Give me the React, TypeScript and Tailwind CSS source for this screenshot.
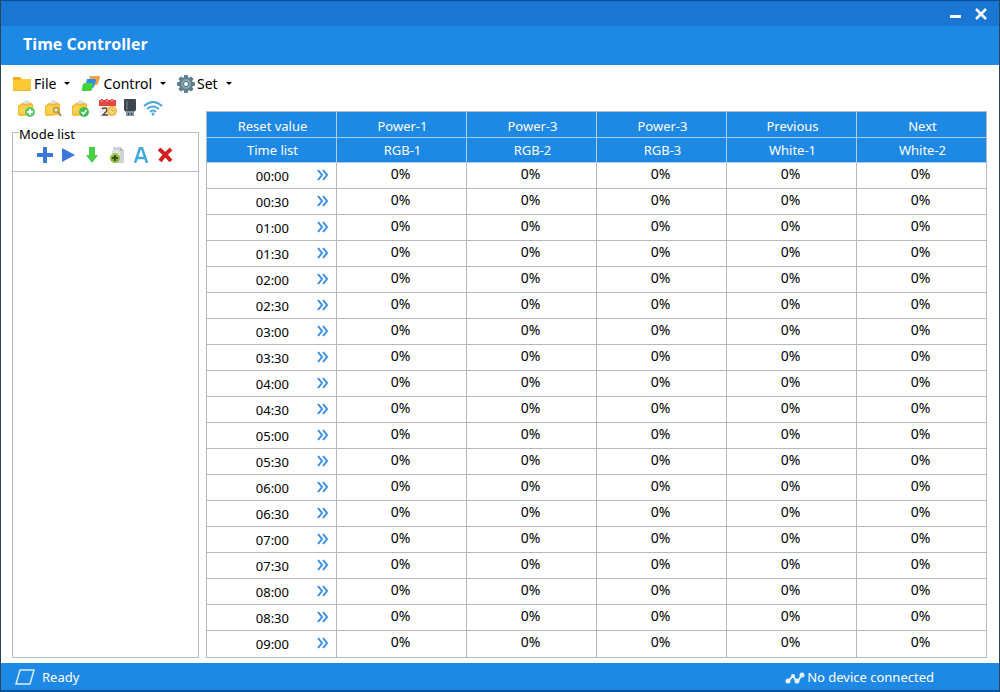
import { useState } from 'react'
import type { ReactNode } from 'react'

const channels = [
  { action: 'Power-1', name: 'RGB-1' },
  { action: 'Power-3', name: 'RGB-2' },
  { action: 'Power-3', name: 'RGB-3' },
  { action: 'Previous', name: 'White-1' },
  { action: 'Next', name: 'White-2' },
]

const times = Array.from({ length: 19 }, (_, i) => {
  const hour = String(Math.floor(i / 2)).padStart(2, '0')
  return `${hour}:${i % 2 ? '30' : '00'}`
})

function FolderIcon() {
  return (
    <svg width="20" height="16" viewBox="0 0 20 16">
      <path d="M1 1h7l2 2h9v12H1z" fill="#f0b01e" />
      <path d="M1 4h7l2-1h9v12H1z" fill="#fcc934" />
      <path d="M1 14h18v1H1z" fill="#f3b62a" />
    </svg>
  )
}

function LayersIcon() {
  return (
    <svg width="20" height="16" viewBox="0 0 20 16">
      <path d="M9 0h9q1.500 0 1 1.500l-2 6q-.5 1.500-2 1.500H7z" fill="#f2a04a" />
      <path d="M6 3h8q1.500 0 1 1.500l-2 6q-.5 1.500-2 1.500H4z" fill="#2f8fe8" />
      <path d="M4 7h7q1.500 0 1 1.500l-1 5q-.5 1.500-2 1.500H2q-1.500 0-1.200-1.500l1-5Q2.300 7 4 7z" fill="#45d13c" />
    </svg>
  )
}

function GearIcon() {
  return (
    <svg width="18" height="18" viewBox="0 0 18 18">
      <g fill="#5d7f8a">
        <rect x="7" y="0" width="4" height="18" rx="1" />
        <rect x="7" y="0" width="4" height="18" rx="1" transform="rotate(45 9 9)" />
        <rect x="7" y="0" width="4" height="18" rx="1" transform="rotate(90 9 9)" />
        <rect x="7" y="0" width="4" height="18" rx="1" transform="rotate(135 9 9)" />
        <circle cx="9" cy="9" r="7" />
      </g>
      <circle cx="9" cy="9" r="5" fill="#86a5ae" />
      <circle cx="9" cy="9" r="2.5" fill="#fff" stroke="#4e717d" />
    </svg>
  )
}

function ProjectIcon({ children }: { children: ReactNode }) {
  return (
    <svg width="18" height="18" viewBox="0 0 18 18">
      <path d="M4 5l5-4 5 2v4H4z" fill="#dcdde2" />
      <path d="M1 7l4-3 3 1 6-1q2 0 2 2v9q0 1-1 1l-12 1q-2 0-2-2z" fill="#f3b92a" />
      <path d="M2 8l3-2h2l2 1 5-1q1 0 1 1v7q0 1-1 1H3q-1 0-1-1z" fill="#fad14e" />
      {children}
    </svg>
  )
}

function NewIcon() {
  return (
    <ProjectIcon>
      <circle cx="13" cy="13" r="5" fill="#58cc63" />
      <path d="M13 10v6M10 13h6" stroke="#fff" strokeWidth="2" />
    </ProjectIcon>
  )
}

function FindIcon() {
  return (
    <ProjectIcon>
      <circle cx="12" cy="11" r="2.5" fill="#f3e6ae" stroke="#b39a59" strokeWidth="1.5" />
      <path d="M14 13l3 4" stroke="#a38f63" strokeWidth="2" />
    </ProjectIcon>
  )
}

function SaveIcon() {
  return (
    <ProjectIcon>
      <circle cx="13" cy="13" r="5" fill="#43bd52" />
      <path d="M10.500 13l2 2 3-4" fill="none" stroke="#fff" strokeWidth="1.5" />
    </ProjectIcon>
  )
}

function CalendarIcon() {
  return (
    <svg width="20" height="18" viewBox="0 0 20 18">
      <path d="M2 6h16v11H2z" fill="#efefef" />
      <path d="M1 1h2V0h2v1h3V0h2v1h3V0h2v1h3v6H1z" fill="#e5453f" />
      <path d="M4 1v2M9 1v2M14 1v2" stroke="#f8b3ad" />
      <path d="M4 10q1-1 3-1 2 0 2 2 0 1-4 5h5" fill="none" stroke="#55443f" strokeWidth="1.5" />
      <circle cx="14" cy="12" r="5" fill="#f5b83a" />
      <circle cx="14" cy="12" r="3" fill="#fbdc8a" />
      <path d="M14 10v2h2" fill="none" stroke="#e6962c" />
    </svg>
  )
}

function UsbIcon() {
  return (
    <svg width="14" height="18" viewBox="0 0 14 18">
      <path d="M1 1q0-1 1-1h10q1 0 1 1v10l-2 2H3l-2-2z" fill="#3d454e" />
      <path d="M3 2h2v9H3z" fill="#5b6671" />
      <path d="M3 12h8v5H3z" fill="#8295a4" />
      <path d="M5 14h1v2H5zM8 14h1v2H8z" fill="#384550" />
    </svg>
  )
}

function WifiIcon() {
  return (
    <svg width="20" height="16" viewBox="0 0 20 16" fill="none" stroke="#4ba5dc" strokeWidth="2">
      <path d="M1 6q9-8 18 0" />
      <path d="M4 9q6-5 12 0" />
      <path d="M7 12q3-3 6 0" />
      <circle cx="10" cy="14" r="1.5" fill="#4ba5dc" stroke="none" />
    </svg>
  )
}

function CopyIcon() {
  return (
    <svg width="16" height="18" viewBox="0 0 16 18">
      <path d="M4 1h7l4 4v12H4z" fill="#cfd4d7" />
      <path d="M11 1v4h4z" fill="#aeb6bb" />
      <path d="M3 4h6l2 2v9H3z" fill="#e2e5e4" />
      <circle cx="6" cy="12" r="5" fill="#8bb83e" />
      <path d="M6 9v6M3 12h6" stroke="#355317" strokeWidth="2" />
      <path d="M2 10q4-4 8 0" fill="none" stroke="#b9d886" />
    </svg>
  )
}

const menus = [
  { label: 'File', icon: <FolderIcon /> },
  { label: 'Control', icon: <LayersIcon /> },
  { label: 'Set', icon: <GearIcon /> },
]

const tools = [
  { label: 'New project', icon: <NewIcon />, width: 'w-[27px]' },
  { label: 'Open project', icon: <FindIcon />, width: 'w-[27px]' },
  { label: 'Save project', icon: <SaveIcon />, width: 'w-[27px]' },
  { label: 'Sync time', icon: <CalendarIcon />, width: 'w-[25px]' },
  { label: 'USB', icon: <UsbIcon />, width: 'w-5' },
  { label: 'Wi-Fi', icon: <WifiIcon />, width: 'w-[25px]' },
]

const modeTools = [
  {
    label: 'Add mode',
    icon: <path d="M6 0h4v6h6v4h-6v6H6v-6H0V6h6z" fill="#3c78d8" />,
  },
  {
    label: 'Run mode',
    icon: <path d="M1 1l13 7-13 7z" fill="#3c78dc" />,
  },
  {
    label: 'Download mode',
    icon: <path d="M4 0h6v8h3l-6 8-6-8h3z" fill="#45d143" />,
  },
  { label: 'Copy mode', icon: null },
  {
    label: 'Rename mode',
    icon: <path d="M2 16L7 1h2l5 15M4 11h8" fill="none" stroke="#3ea9dc" strokeWidth="2.5" />,
  },
  {
    label: 'Delete mode',
    icon: <path d="M2 2q5 4 12 12M14 2q-6 5-11 12" fill="none" stroke="#d3201f" strokeWidth="4" />,
  },
]

export default function App() {
  const [values] = useState(() => times.map(() => channels.map(() => 0)))

  return (
    <div className="flex min-h-screen flex-col border-x border-t border-b-2 border-x-[#29465a] border-t-[#0d4a94] border-b-[#0c5596] bg-white font-['Noto_Sans','Open_Sans',sans-serif] text-black">
      <div className="flex h-[25px] items-center justify-end gap-2 bg-[#1976d2] pr-2.5">
        <button type="button" aria-label="Minimize" className="flex h-5 w-5 items-center justify-center">
          <svg width="16" height="16" viewBox="0 0 16 16">
            <path d="M3 9h11v3H3z" fill="#fff" />
          </svg>
        </button>
        <button type="button" aria-label="Close" className="flex h-5 w-4 items-center justify-center">
          <svg width="14" height="14" viewBox="0 0 14 14">
            <path d="M2 2l10 10M12 2L2 12" stroke="#fff" strokeWidth="2.5" />
          </svg>
        </button>
      </div>
      <header className="flex h-[39px] items-center bg-[#1e88e5] pb-1 pl-[22px]">
        <h1 className="font-['Open_Sans','Noto_Sans',sans-serif] text-base font-bold text-white">Time Controller</h1>
      </header>

      <nav className="flex h-8 items-center gap-2.5 pt-1.5 pl-[11px]">
        {menus.map((menu) => (
          <button key={menu.label} type="button" className="flex h-6 items-center gap-0.5 text-sm">
            {menu.icon}
            <span>{menu.label}</span>
            <svg className="ml-[5px]" width="8" height="6" viewBox="0 0 8 6">
              <path d="M1 1h6L4 4z" fill="#000" />
            </svg>
          </button>
        ))}
      </nav>

      <main className="flex flex-1 gap-[7px] pr-3 pb-[5px] pl-[11px]">
        <div className="flex w-[187px] flex-col">
          <div className="flex h-[25px] items-start pt-0.5 pl-[5px]">
            {tools.map((tool) => (
              <button
                key={tool.label}
                type="button"
                aria-label={tool.label}
                className={`flex h-[18px] shrink-0 items-center justify-start ${tool.width}`}
              >
                {tool.icon}
              </button>
            ))}
          </div>
          <fieldset className="flex min-w-0 flex-1 flex-col border border-[#b9bcc4]">
            <legend className="ml-1.5 pt-1 text-[13px] leading-4">Mode list</legend>
            <div className="-mt-1 flex h-[34px] items-center gap-2 border-b border-[#b9bcc4] pl-6">
              {modeTools.map((tool) => (
                <button key={tool.label} type="button" aria-label={tool.label}>
                  {tool.icon ? (
                    <svg width="16" height="16" viewBox="0 0 16 16">
                      {tool.icon}
                    </svg>
                  ) : (
                    <CopyIcon />
                  )}
                </button>
              ))}
            </div>
          </fieldset>
        </div>

        <div className="mt-3.5 min-w-0 flex-1 overflow-hidden border border-[#b5bac2]">
          {/* one pixel wider than its frame, so the last column line is hidden behind it */}
          <table className="w-[calc(100%+1px)] table-fixed border-separate border-spacing-0 text-center text-[13px]">
            <thead className="bg-[#1e88e5] text-white">
              <tr className="h-[26px]">
                {['Reset value', ...channels.map((c) => c.action)].map((label, i) => (
                  <th key={i} className="border-r border-b border-[#a9cdef] p-0 font-normal">
                    <button type="button" className="h-[25px] w-full pt-0.5 pl-0.5 leading-5">{label}</button>
                  </th>
                ))}
              </tr>
              <tr className="h-[25px]">
                {['Time list', ...channels.map((c) => c.name)].map((label) => (
                  <th key={label} className="border-r border-b border-[#a9cdef] py-0 pr-0 pl-0.5 leading-6 font-normal">
                    {label}
                  </th>
                ))}
              </tr>
            </thead>
            <tbody className="[&>tr:last-child>*]:border-b-0">
              {times.map((time, row) => (
                <tr key={time} className="h-[26px]">
                  <th className="border-r border-b border-[#b5b8bd] p-0 font-normal">
                    <div className="flex h-[25px] items-center justify-end pr-[5px]">
                      <span className="mr-[26px] leading-5">{time}</span>
                      <button type="button" aria-label={`Apply ${time}`} className="pb-0.5">
                        <svg width="16" height="14" viewBox="0 0 16 14" fill="none" stroke="#3a8fe0" strokeWidth="2">
                          <path d="M3 2l4 5-4 5M8 2l4 5-4 5" />
                        </svg>
                      </button>
                    </div>
                  </th>
                  {values[row].map((value, col) => (
                    <td key={col} className="border-r border-b border-[#b5b8bd] pt-0 pr-0.5 pb-1 pl-0 text-sm leading-5">
                      {value}%
                    </td>
                  ))}
                </tr>
              ))}
            </tbody>
          </table>
        </div>
      </main>

      <footer className="flex h-[27px] items-center justify-between bg-[#1e88e5] pt-0.5 pr-[65px] pl-3.5 text-[13px] text-white">
        <div className="flex items-center gap-[7px]">
          <svg width="20" height="18" viewBox="0 0 20 18">
            <path d="M5 1h14l-4 14H1z" fill="none" stroke="#d9ecfb" strokeWidth="1.5" />
          </svg>
          <span>Ready</span>
        </div>
        <div className="flex items-center gap-0.5">
          <svg width="20" height="14" viewBox="0 0 20 14" fill="#e6f1fb">
            <path d="M3 10l5-5 4 6 5-7" fill="none" stroke="#e6f1fb" strokeWidth="2" />
            <circle cx="3" cy="10" r="2.5" />
            <circle cx="8" cy="5" r="2" />
            <circle cx="12" cy="10" r="2.5" />
            <circle cx="17" cy="4" r="2.5" />
          </svg>
          <span>No device connected</span>
        </div>
      </footer>
    </div>
  )
}
